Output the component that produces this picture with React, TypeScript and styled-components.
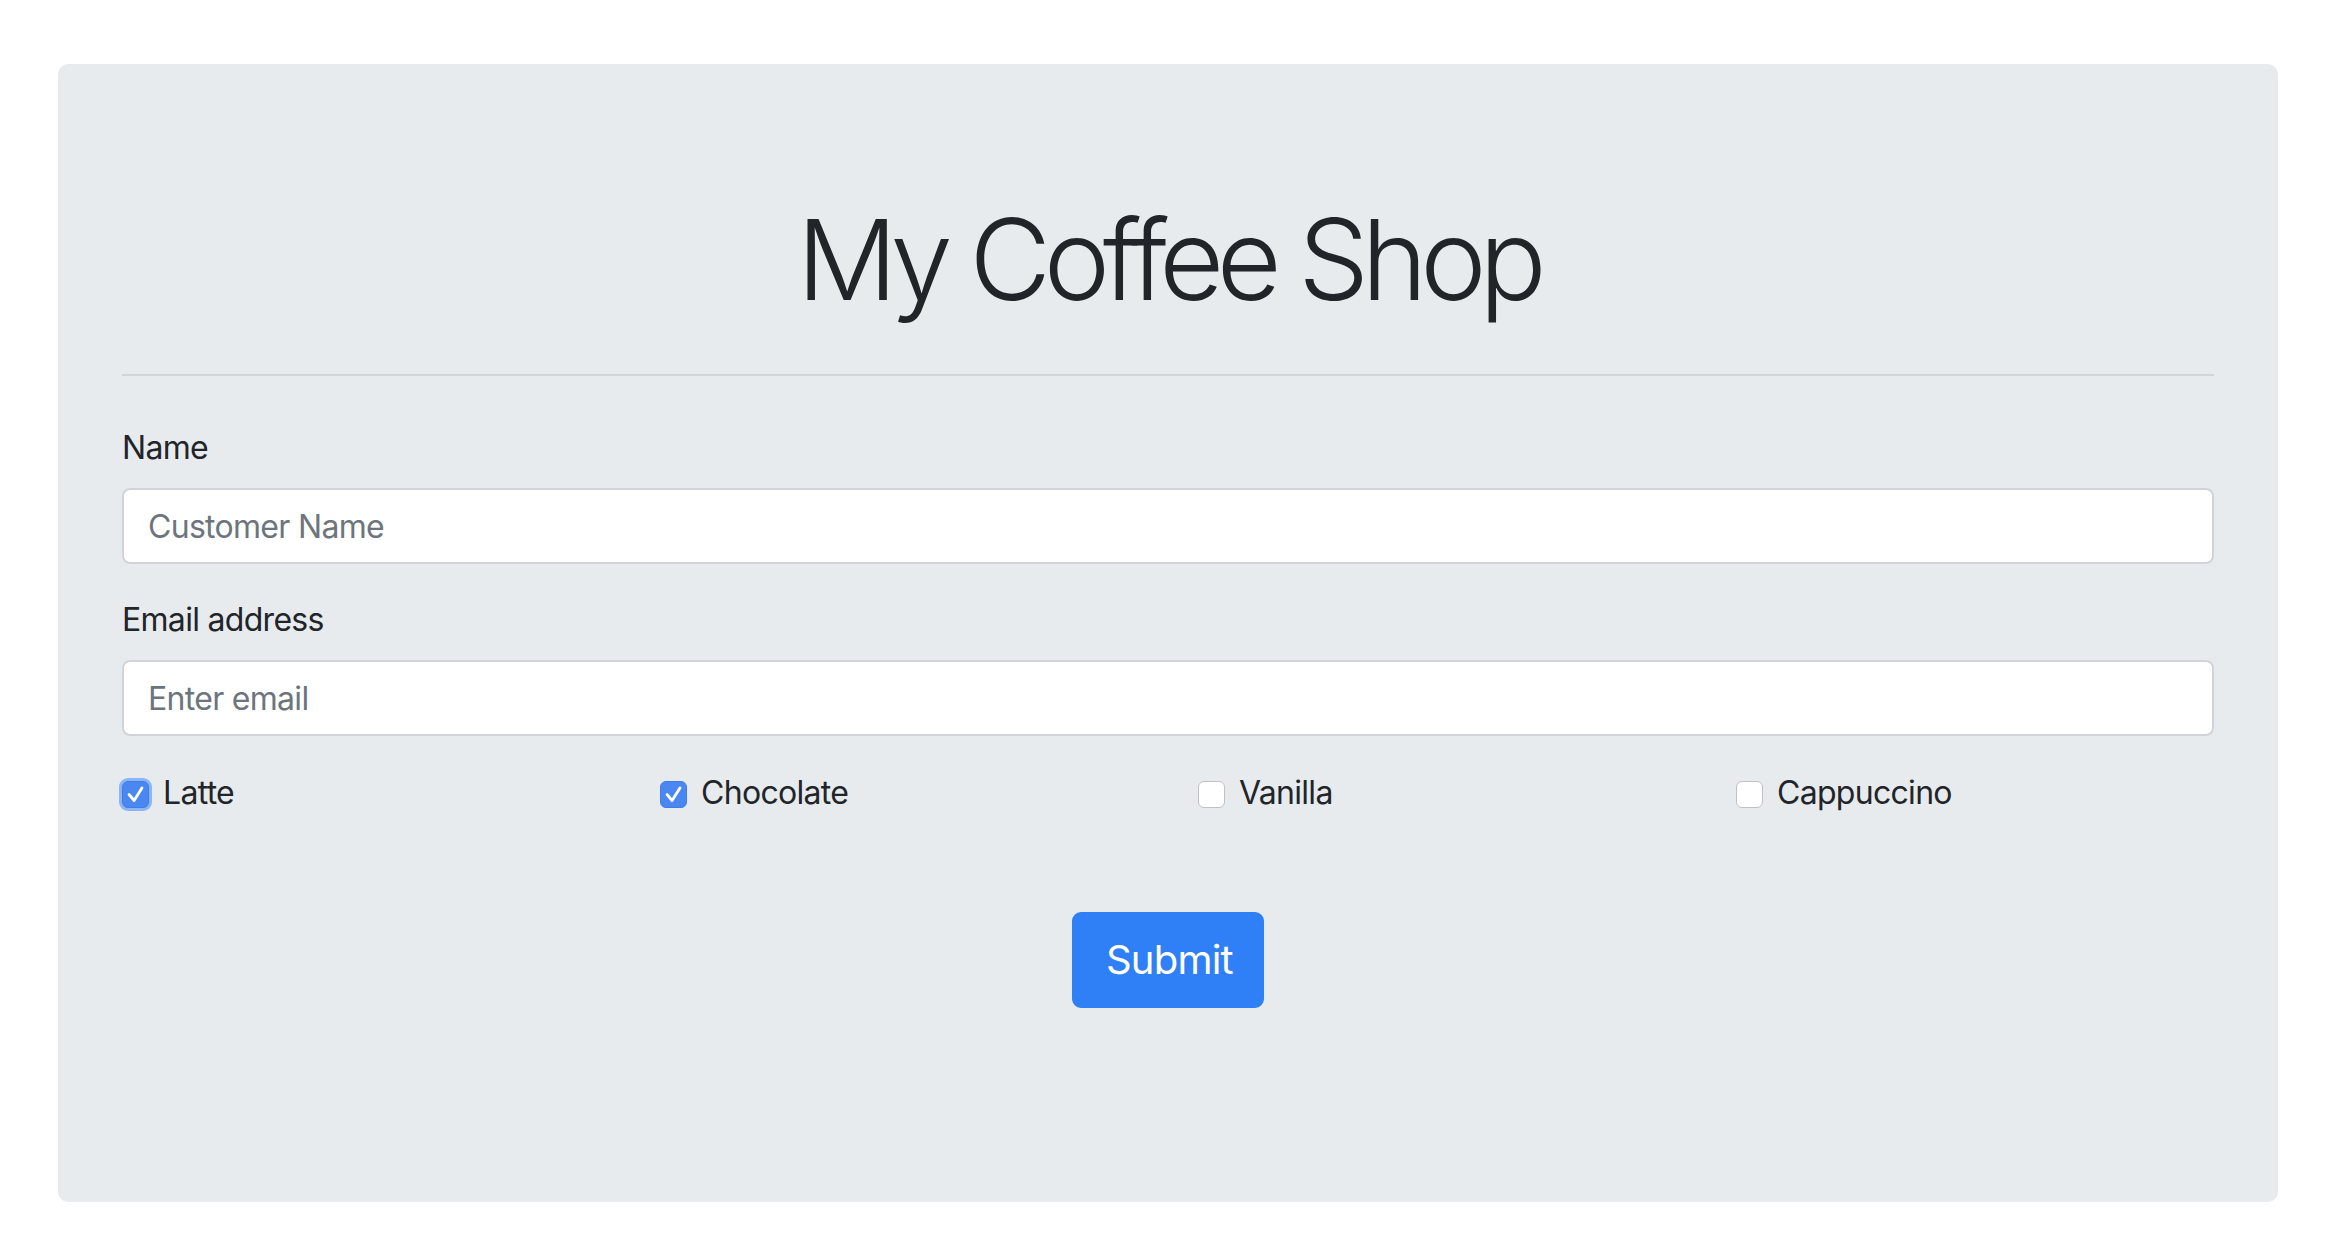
import React from "react";
import styled, { createGlobalStyle } from "styled-components";

const GlobalStyle = createGlobalStyle`
  html, body {
    margin: 0;
    padding: 0;
    background: #ffffff;
  }
  body {
    font-family: Inter, "Noto Sans", "Liberation Sans", sans-serif;
    color: #212529;
  }
  * { box-sizing: border-box; }
`;

const Page = styled.div`
  padding: 64px 0 0 58px;
`;

const Jumbotron = styled.section`
  width: 2220px;
  background: #e8ebee;
  border-radius: 10px;
  padding: 128px 64px;
`;

const Title = styled.h1`
  margin: 0;
  text-align: center;
  font-family: Inter, "Noto Sans", sans-serif;
  font-weight: 300;
  font-size: 112px;
  line-height: 134.4px;
  letter-spacing: -7.4px;
  color: #212529;
`;

const Divider = styled.hr`
  margin: 48px 0;
  border: 0;
  border-top: 2px solid #d2d5d8;
`;

const FormGroup = styled.div`
  margin-bottom: 32px;
`;

const Label = styled.label`
  display: block;
  font-size: 32px;
  line-height: 48px;
  margin-bottom: 16px;
  letter-spacing: -0.7px;
`;

const TextInput = styled.input`
  display: block;
  width: 100%;
  height: 76px;
  padding: 12px 24px;
  font-family: inherit;
  font-size: 32px;
  line-height: 48px;
  letter-spacing: -0.7px;
  color: #495057;
  background: #ffffff;
  border: 2px solid #ced4da;
  border-radius: 8px;
  outline: none;
  &::placeholder {
    color: #6c757d;
    opacity: 1;
  }
`;

const CheckRow = styled.div`
  display: grid;
  grid-template-columns: repeat(4, 1fr);
  column-gap: 60px;
  margin-bottom: 32px;
`;

const Check = styled.label`
  display: flex;
  align-items: center;
  height: 48px;
  font-size: 32px;
  letter-spacing: -0.7px;
  cursor: pointer;
`;

const Box = styled.span<{ $checked: boolean; $focused?: boolean }>`
  flex: none;
  width: 27px;
  height: 27px;
  margin: 5px 14px 0 0;
  border-radius: 6px;
  display: flex;
  align-items: center;
  justify-content: center;
  background: ${(p) => (p.$checked ? "#4a87f1" : "#ffffff")};
  border: ${(p) => (p.$checked ? "1px solid #3f7de9" : "1.5px solid #bfc1c4")};
  box-shadow: ${(p) => (p.$focused ? "0 0 0 3px #8db4f4" : "none")};
`;

const ButtonRow = styled.div`
  display: flex;
  justify-content: center;
  padding-top: 64px;
  margin-bottom: 66px;
`;

const SubmitButton = styled.button`
  font-family: inherit;
  font-size: 40px;
  line-height: 60px;
  padding: 16px 32px;
  width: 192px;
  color: #ffffff;
  background: #2f80f6;
  border: 2px solid #2f80f6;
  border-radius: 9px;
  cursor: pointer;
  letter-spacing: -0.8px;
`;

const CheckMark = () => (
  <svg width="27" height="27" viewBox="0 0 27 27">
    <path
      d="M6.5 13.5 L12 20 L20.5 6.5"
      fill="none"
      stroke="#ffffff"
      strokeWidth="3"
      strokeLinecap="round"
      strokeLinejoin="round"
    />
  </svg>
);

const flavours = [
  { name: "Latte", checked: true, focused: true },
  { name: "Chocolate", checked: true, focused: false },
  { name: "Vanilla", checked: false, focused: false },
  { name: "Cappuccino", checked: false, focused: false },
];

export default function App() {
  return (
    <>
      <GlobalStyle />
      <Page>
        <Jumbotron>
          <Title>My Coffee Shop</Title>
          <Divider />
          <form onSubmit={(e) => e.preventDefault()}>
            <FormGroup>
              <Label htmlFor="name">Name</Label>
              <TextInput id="name" type="text" placeholder="Customer Name" />
            </FormGroup>
            <FormGroup>
              <Label htmlFor="email">Email address</Label>
              <TextInput id="email" type="email" placeholder="Enter email" />
            </FormGroup>
            <CheckRow>
              {flavours.map((f) => (
                <Check key={f.name}>
                  <Box $checked={f.checked} $focused={f.focused}>
                    {f.checked && <CheckMark />}
                  </Box>
                  {f.name}
                </Check>
              ))}
            </CheckRow>
            <ButtonRow>
              <SubmitButton type="submit">Submit</SubmitButton>
            </ButtonRow>
          </form>
        </Jumbotron>
      </Page>
    </>
  );
}
